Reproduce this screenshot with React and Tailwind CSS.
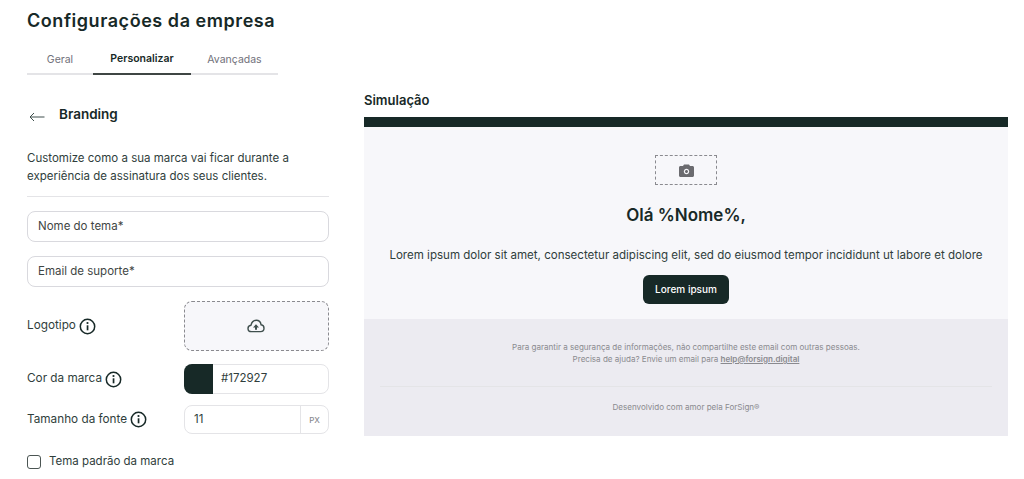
import React from 'react'

const InfoIcon = () => (
    <svg width="17" height="17" viewBox="0 0 17 17" fill="none" className="shrink-0">
        <circle cx="8.5" cy="8.5" r="7.2" stroke="#172927" strokeWidth="1.5" />
        <rect x="7.7" y="7.3" width="1.7" height="5" fill="#172927" />
        <circle cx="8.5" cy="5" r="1.1" fill="#172927" />
    </svg>
)

const CloudUpload = () => (
    <svg width="18" height="14" viewBox="0 0 18 14" fill="none">
        <path d="M4.5 12.6C2.5 12.6 1 11.2 1 9.4C1 7.7 2.3 6.4 4 6.2C4.6 3.6 6.6 1.3 9.2 1.3C11.8 1.3 13.7 3.2 14.1 5.8C15.8 6 17 7.4 17 9.2C17 11.1 15.6 12.6 13.6 12.6H4.5Z" stroke="#3f4f4d" strokeWidth="1.4" />
        <path d="M9 5.2L12 8.4H10V10.8H8V8.4H6L9 5.2Z" fill="#3f4f4d" />
    </svg>
)

const CameraIcon = () => (
    <svg width="15" height="13" viewBox="0 0 15 13" fill="none">
        <path fillRule="evenodd" clipRule="evenodd" d="M5 0.5H10L11 2H13.5C14.3 2 15 2.7 15 3.5V11.5C15 12.3 14.3 13 13.5 13H1.5C0.7 13 0 12.3 0 11.5V3.5C0 2.7 0.7 2 1.5 2H4L5 0.5ZM7.5 10.2C9 10.2 10.2 9 10.2 7.5C10.2 6 9 4.8 7.5 4.8C6 4.8 4.8 6 4.8 7.5C4.8 9 6 10.2 7.5 10.2ZM7.5 9C8.3 9 9 8.3 9 7.5C9 6.7 8.3 6 7.5 6C6.7 6 6 6.7 6 7.5C6 8.3 6.7 9 7.5 9Z" fill="#6b6b6f" />
    </svg>
)

const App = () => {
    return (
        <div className="h-[479px] w-[1024px] overflow-hidden bg-white font-['Inter',sans-serif] text-[#172927]">
            <div className="flex items-start pl-[27px]">
                <div className="w-[302px] shrink-0">
                    <h1 className="mt-[9px] text-[18px] leading-[24px] font-semibold tracking-[0.55px]">Configurações da empresa</h1>

                    <div className="mt-[12px] flex h-[30px] w-[251px] border-b-2 border-[#e4e4e7] text-[10.5px]">
                        <div className="flex h-[30px] w-[66px] items-center justify-center text-[#71717a]">Geral</div>
                        <div className="flex h-[30px] w-[98px] items-center justify-center border-b-2 border-[#3f4644] font-semibold text-[#172927]">Personalizar</div>
                        <div className="flex h-[30px] w-[87px] items-center justify-center text-[#71717a]">Avançadas</div>
                    </div>

                    <div className="mt-[29px] flex h-[22px] items-center">
                        <svg width="16" height="10" viewBox="0 0 16 10" fill="none" className="mt-[3px] ml-[2px]">
                            <path d="M15.5 5H1M5 1L1 5L5 9" stroke="#3f4f4d" strokeWidth="1" />
                        </svg>
                        <span className="mb-[2px] ml-[14px] text-[13.5px] font-semibold">Branding</span>
                    </div>

                    <p className="mt-[23px] text-[11.5px] leading-[18px] text-[#303e3c]">
                        Customize como a sua marca vai ficar durante a<br />experiência de assinatura dos seus clientes.
                    </p>
                    <div className="mt-[11px] h-px bg-[#e4e4e7]" />

                    <div className="mt-[14px] flex h-[31px] items-center rounded-lg border border-[#d9d9de] px-[10px] text-[11.5px] text-[#3f4644]">Nome do tema*</div>
                    <div className="mt-[14px] flex h-[31px] items-center rounded-lg border border-[#d9d9de] px-[10px] text-[11.5px] text-[#3f4644]">Email de suporte*</div>

                    <div className="mt-[14px] flex h-[50px] items-center justify-between">
                        <div className="flex items-center gap-[3px] text-[11.75px] text-[#303e3c]">Logotipo <InfoIcon /></div>
                        <div className="flex h-[50px] w-[145px] items-center justify-center rounded-lg border border-dashed border-[#8a8a8f] bg-[#f7f7fa] pr-[2px]">
                            <CloudUpload />
                        </div>
                    </div>

                    <div className="mt-[13px] flex h-[30px] items-center justify-between">
                        <div className="flex items-center gap-[3px] text-[11.75px] text-[#303e3c]">Cor da marca <InfoIcon /></div>
                        <div className="flex h-[30px] w-[145px] items-center rounded-lg border border-[#e4e4e7]">
                            <div className="-my-px -ml-px h-[30px] w-[29px] rounded-l-lg bg-[#172927]" />
                            <span className="ml-[8px] text-[11.5px] text-[#303e3c]">#172927</span>
                        </div>
                    </div>

                    <div className="mt-[11px] flex h-[29px] items-center justify-between">
                        <div className="flex items-center gap-[3px] text-[11.75px] text-[#303e3c]">Tamanho da fonte <InfoIcon /></div>
                        <div className="flex h-[29px] w-[145px] items-center rounded-lg border border-[#e4e4e7]">
                            <span className="flex-1 pl-[9px] text-[11.5px] text-[#303e3c]">11</span>
                            <span className="flex h-full w-[28px] items-center justify-center border-l border-[#e4e4e7] text-[8px] font-medium text-[#8a8a8f]">PX</span>
                        </div>
                    </div>

                    <label className="mt-[19px] flex items-center gap-[8px] text-[11.5px] text-[#303e3c]">
                        <span className="h-[14px] w-[14px] rounded-[3px] border-[1.5px] border-[#4b5553]" />
                        Tema padrão da marca
                    </label>
                </div>

                <div className="ml-[35px] w-[644px] shrink-0">
                    <h2 className="mt-[91px] text-[13px] leading-[18px] font-semibold">Simulação</h2>
                    <div className="mt-[8px] h-[10px] bg-[#172927]" />
                    <div className="flex h-[192px] flex-col items-center bg-[#f7f7fa]">
                        <div className="mt-[28px] flex h-[30px] w-[62px] items-center justify-center border border-dashed border-[#8a8a8f]">
                            <CameraIcon />
                        </div>
                        <h3 className="mt-[18px] text-[17px] leading-[24px] font-semibold">Olá %Nome%,</h3>
                        <p className="mt-[20px] text-[11.55px] leading-[16px] text-[#303e3c]">Lorem ipsum dolor sit amet, consectetur adipiscing elit, sed do eiusmod tempor incididunt ut labore et dolore</p>
                        <button className="mt-[12px] h-[29px] w-[86px] rounded-md bg-[#172927] text-[10px] font-medium text-white">Lorem ipsum</button>
                    </div>
                    <div className="flex h-[117px] flex-col items-center bg-[#ecebf1] px-[16px] text-[8.05px] text-[#8a8a8f]">
                        <p className="mt-[22px] text-center leading-[12px]">
                            Para garantir a segurança de informações, não compartilhe este email com outras pessoas.<br />
                            Precisa de ajuda? Envie um email para <span className="font-semibold underline">help@forsign.digital</span>
                        </p>
                        <div className="mt-[21px] h-px w-full bg-[#e4e4e7]" />
                        <p className="mt-[14px] leading-[12px]">Desenvolvido com amor pela ForSign®</p>
                    </div>
                </div>
            </div>
        </div>
    )
}

export default App
